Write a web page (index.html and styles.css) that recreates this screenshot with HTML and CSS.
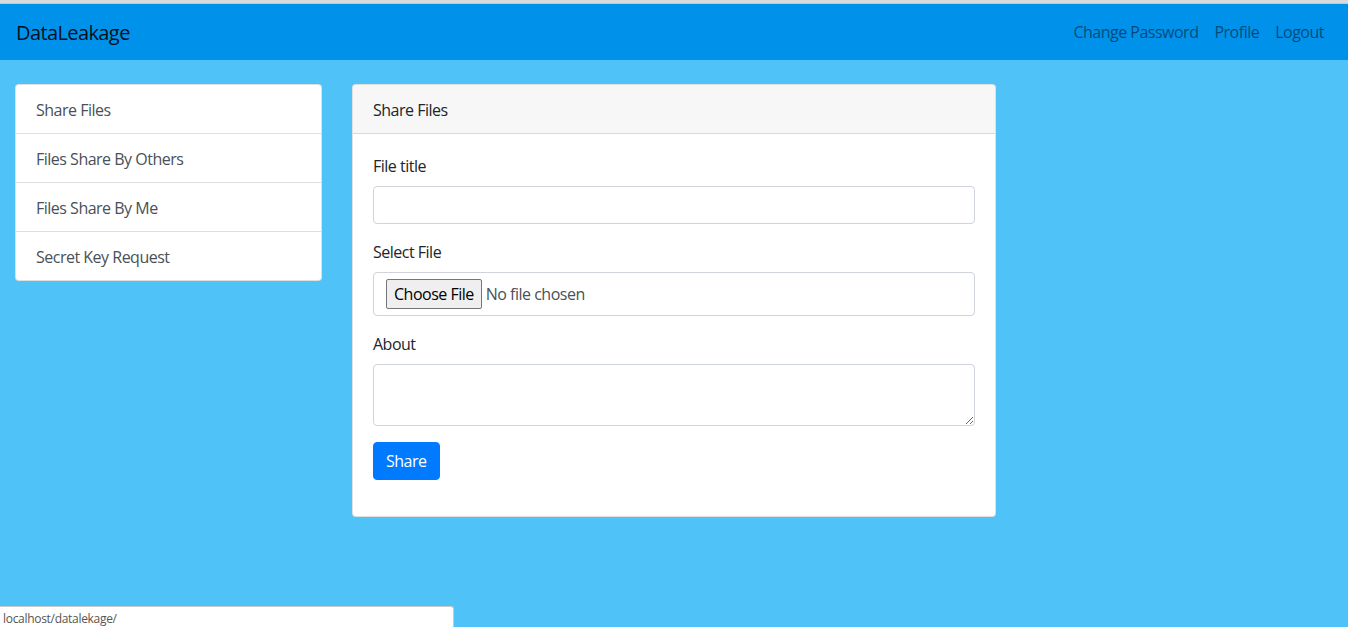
FILE: index.html
```html
<!DOCTYPE html>
<html lang="en">
<head>
<meta charset="utf-8">
<title>DataLeakage</title>
<link rel="stylesheet" href="styles.css">
</head>
<body>
<div class="topline"></div>
<nav class="navbar">
  <a class="brand" href="#">DataLeakage</a>
  <ul class="nav-links">
    <li><a href="#">Change Password</a></li>
    <li><a href="#">Profile</a></li>
    <li><a href="#">Logout</a></li>
  </ul>
</nav>
<main class="content">
  <aside class="col-side">
    <div class="list-group">
      <a class="list-item" href="#">Share Files</a>
      <a class="list-item" href="#">Files Share By Others</a>
      <a class="list-item" href="#">Files Share By Me</a>
      <a class="list-item" href="#">Secret Key Request</a>
    </div>
  </aside>
  <section class="col-main">
    <div class="card">
      <div class="card-header">Share Files</div>
      <form class="card-body">
        <div class="form-group">
          <label class="label" for="title">File title</label>
          <input class="form-control" id="title" type="text">
        </div>
        <div class="form-group">
          <label class="label" for="file">Select File</label>
          <input class="form-control file-control" id="file" type="file">
        </div>
        <div class="form-group">
          <label class="label" for="about">About</label>
          <textarea class="form-control textarea" id="about" rows="2"></textarea>
        </div>
        <div class="form-group">
          <button class="btn" type="button">Share</button>
        </div>
      </form>
    </div>
  </section>
</main>
<div class="statusbar">localhost/datalekage/</div>
</body>
</html>
```
FILE: styles.css
```css
* { box-sizing: border-box; }
html, body { height: 100%; }
body {
  margin: 0;
  background: #4fc3f7;
  font-family: "Open Sans", "Noto Sans", sans-serif;
  font-size: 16px;
  line-height: 1.5;
  color: #212529;
  overflow: hidden;
}
.topline {
  height: 4px;
  background: #dadada;
  border-bottom: 1px solid #c8c8c8;
}
.navbar {
  height: 56px;
  background: #0091ea;
  display: flex;
  align-items: center;
  justify-content: space-between;
  padding: 8px 16px;
}
.brand {
  font-size: 20px;
  color: rgba(0, 0, 0, 0.9);
  text-decoration: none;
  letter-spacing: -0.6px;
  line-height: 30px;
  padding-top: 2px;
}
.nav-links {
  list-style: none;
  margin: 0;
  padding: 0;
  display: flex;
}
.nav-links a {
  display: block;
  padding: 8px 8px;
  color: rgba(0, 0, 0, 0.5);
  text-decoration: none;
  letter-spacing: -0.5px;
}
.content {
  display: flex;
  padding: 24px 0 0;
}
.col-side {
  width: 25%;
  padding: 0 15px;
}
.col-main {
  width: 50%;
  padding: 0 15px;
}
.list-group {
  display: flex;
  flex-direction: column;
  background: #fff;
  border: 1px solid rgba(0, 0, 0, 0.125);
  border-radius: 4px;
}
.list-item {
  display: block;
  padding: 13px 20px 11px;
  color: #495057;
  text-decoration: none;
  border-top: 1px solid rgba(0, 0, 0, 0.125);
  letter-spacing: -0.5px;
}
.list-item:first-child { border-top: 0; }
.card {
  background: #fff;
  border: 1px solid rgba(0, 0, 0, 0.125);
  border-radius: 4px;
}
.card-header {
  padding: 13px 20px 11px;
  background: #f7f7f7;
  border-bottom: 1px solid rgba(0, 0, 0, 0.125);
  border-radius: 3px 3px 0 0;
  letter-spacing: -0.5px;
}
.card-body {
  display: block;
  padding: 20px 20px 20px;
}
.form-group { margin-bottom: 16px; }
.label {
  display: inline-block;
  margin-bottom: 8px;
  letter-spacing: -0.5px;
}
.form-control {
  display: block;
  width: 100%;
  height: 38px;
  padding: 6px 12px;
  font: inherit;
  color: #495057;
  background: #fff;
  border: 1px solid #ced4da;
  border-radius: 4px;
}
.file-control {
  height: 44px;
  letter-spacing: -0.5px;
}
.file-control::file-selector-button {
  font: inherit;
  letter-spacing: -0.5px;
  color: #000;
  background: #efefef;
  border: 1px solid #767676;
  border-radius: 2px;
  padding: 1px 7px;
  margin-right: 4px;
  height: 30px;
}
.textarea {
  height: 62px;
  resize: vertical;
}
.btn {
  font: inherit;
  letter-spacing: -0.5px;
  color: #fff;
  background: #007bff;
  border: 1px solid #007bff;
  border-radius: 4px;
  padding: 6px 12px;
  height: 38px;
}
.statusbar {
  position: fixed;
  left: 0;
  bottom: 0;
  width: 454px;
  height: 21px;
  background: #fff;
  border-top: 1px solid #c9c9c9;
  border-right: 1px solid #c9c9c9;
  border-top-right-radius: 3px;
  font-size: 12px;
  line-height: 19px;
  padding: 2px 0 0 3px;
  color: #555;
  letter-spacing: -0.3px;
}
```
